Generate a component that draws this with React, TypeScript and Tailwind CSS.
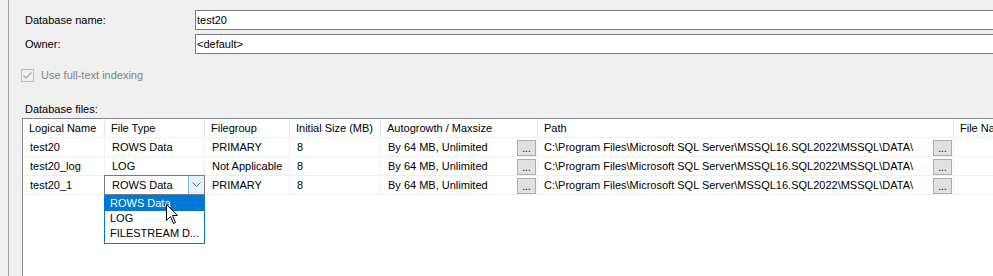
import React from "react";

const font = { fontFamily: '"Liberation Sans", Arial, sans-serif' };

function Ellipsis() {
  return (
    <div className="w-[19px] h-[16px] mt-[1px] mr-[1px] shrink-0 bg-[#e1e1e1] border border-[#adadad] flex items-end justify-center pb-[1px] text-[10px] leading-[10px] text-black">
      ...
    </div>
  );
}

const cell = "h-[19px] border-r border-[#f0f0f0] flex items-center whitespace-nowrap overflow-hidden";

function Row({
  name,
  type,
  group,
  editing,
}: {
  name: string;
  type: string;
  group: string;
  editing?: boolean;
}) {
  return (
    <>
      <div className={`${cell} pl-[7px] border-b`}>{name}</div>
      <div className={`${cell} pl-[7px] border-b relative overflow-visible`}>
        {editing ? (
          <div className="absolute left-[-1px] top-[-1px] w-[101px] h-[20px] z-10">
            <div className="h-full bg-white border border-[#7a7a7a] flex items-center">
              <span className="pl-[7px] flex-1">{type}</span>
              <div className="w-[16px] h-full bg-[#e5f1fb] border-l border-[#7eb4ea] flex items-center justify-center">
                <svg width="9" height="6" viewBox="0 0 9 6">
                  <path d="M0.5 0.5 L4.5 4.5 L8.5 0.5" fill="none" stroke="#606060" strokeWidth="1" />
                </svg>
              </div>
            </div>
            <div className="w-[101px] bg-white border border-[#0078d7] pb-[2px]">
              <div className="h-[15px] bg-[#0078d7] text-white pl-[5px] flex items-center">ROWS Data</div>
              <div className="h-[15px] pl-[5px] flex items-center">LOG</div>
              <div className="h-[15px] pl-[5px] flex items-center">FILESTREAM D...</div>
            </div>
          </div>
        ) : (
          type
        )}
      </div>
      <div className={`${cell} pl-[7px] border-b`}>{group}</div>
      <div className={`${cell} pl-[7px] border-b`}>8</div>
      <div className={`${cell} pl-[7px] border-b justify-between`}>
        <span>By 64 MB, Unlimited</span>
        <Ellipsis />
      </div>
      <div className={`${cell} pl-[6px] border-b justify-between`}>
        <span>C:\Program Files\Microsoft SQL Server\MSSQL16.SQL2022\MSSQL\DATA\</span>
        <Ellipsis />
      </div>
      <div className={`${cell} border-b`}></div>
    </>
  );
}

export default function App() {
  const head =
    "h-[19px] border-r border-[#e5e5e5] border-b border-b-[#f0f0f0] flex items-center pl-[6px] whitespace-nowrap overflow-hidden";
  return (
    <div
      className="w-[993px] h-[276px] bg-[#f0f0f0] overflow-hidden text-[11px] text-black relative"
      style={font}
    >
      <div className="ml-[8px] h-full border-l border-[#a0a0a0] pl-[13px] pt-[10px]">
        <div className="flex h-[20px] items-center">
          <div className="w-[173px] pl-[3px]">Database name:</div>
          <div className="flex-1 h-full bg-white border border-[#7a7a7a] border-r-0 flex items-center pl-[1px] mr-[-20px]">
            test20
          </div>
        </div>
        <div className="flex h-[20px] items-center mt-[4px]">
          <div className="w-[173px] pl-[3px]">Owner:</div>
          <div className="flex-1 h-full bg-white border border-[#7a7a7a] border-r-0 flex items-center pl-[1px] mr-[-20px]">
            &lt;default&gt;
          </div>
        </div>
        <div className="flex items-center mt-[15px] h-[13px] ml-[-1px]">
          <div className="w-[13px] h-[13px] border border-[#bcbcbc] bg-[#f0f0f0] flex items-center justify-center">
            <svg width="11" height="11" viewBox="0 0 11 11">
              <path d="M1.5 5.5 L4 8 L9.5 2.5" fill="none" stroke="#a8a8a8" strokeWidth="1.2" />
            </svg>
          </div>
          <span className="ml-[7px] text-[#838383]">Use full-text indexing</span>
        </div>
        <div className="mt-[18px] h-[18px] pl-[3px] flex items-center">Database files:</div>
        <div className="border-l border-t border-[#828790] bg-white h-[200px] mr-[-200px]">
          <div className="grid grid-cols-[82px_100px_85px_91px_157px_416px_120px]">
            <div className={head}>Logical Name</div>
            <div className={head}>File Type</div>
            <div className={head}>Filegroup</div>
            <div className={head}>Initial Size (MB)</div>
            <div className={head}>Autogrowth / Maxsize</div>
            <div className={head}>Path</div>
            <div className={head}>File Name</div>
            <Row name="test20" type="ROWS Data" group="PRIMARY" />
            <Row name="test20_log" type="LOG" group="Not Applicable" />
            <Row name="test20_1" type="ROWS Data" group="PRIMARY" editing />
          </div>
        </div>
      </div>
      <svg
        className="absolute left-[166px] top-[204px] z-20"
        width="13"
        height="21"
        viewBox="0 0 13 21"
      >
        <path
          d="M0.5 0.5 L0.5 16.5 L4.5 12.5 L7.5 19.5 L9.5 18.5 L6.5 11.5 L11.5 11.5 Z"
          fill="white"
          stroke="black"
          strokeWidth="1"
          strokeLinejoin="miter"
        />
      </svg>
    </div>
  );
}
